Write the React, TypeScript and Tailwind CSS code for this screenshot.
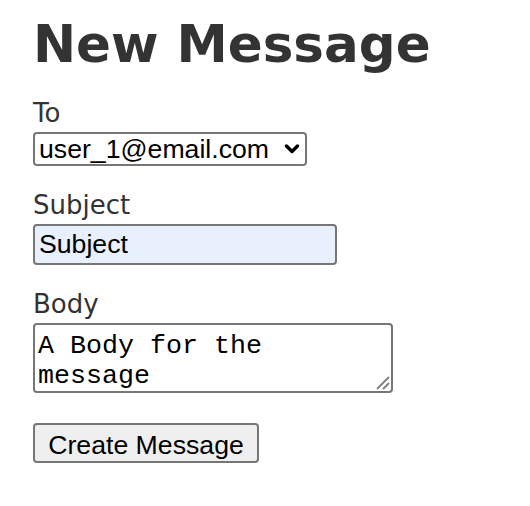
import React from "react";

const App: React.FC = () => {
  return (
    <div className="min-h-screen bg-white pl-[33px] pt-[14px] font-['DejaVu_Sans',Verdana,sans-serif] text-[#333]">
      <h1 className="text-[51.5px] leading-[60px] font-bold">New Message</h1>

      <form className="flex flex-col items-start">
        <label className="mt-[24px] text-[26px] leading-[30px]">To</label>
        <div className="relative mt-[4px]">
          <select
            defaultValue="user_1@email.com"
            className="h-[34px] w-[274px] appearance-none rounded-[4px] border-2 border-[#767676] bg-white pl-[4px] font-['Liberation_Sans',Arial,sans-serif] text-[26.67px] leading-[30px] text-black"
          >
            <option>user_1@email.com</option>
          </select>
          {/* chevron */}
          <svg
            className="pointer-events-none absolute right-[7px] top-[12px]"
            width="16"
            height="10"
            viewBox="0 0 16 10"
          >
            <path d="M2.5 2 L8 7.5 L13.5 2" fill="none" stroke="#000" strokeWidth="3.4" strokeLinecap="round" strokeLinejoin="round" />
          </svg>
        </div>

        <label className="mt-[24px] text-[26px] leading-[30px]">Subject</label>
        <input
          defaultValue="Subject"
          className="mt-[4px] h-[41px] w-[304px] rounded-[4px] border-2 border-[#767676] bg-[#e8f0fe] px-[4px] font-['Liberation_Sans',Arial,sans-serif] text-[26.67px] text-black outline-none"
        />

        <label className="mt-[24px] text-[26px] leading-[30px]">Body</label>
        <div className="relative mt-[4px]">
          <textarea
            defaultValue="A Body for the message"
            className="block h-[70px] w-[360px] resize-none overflow-hidden rounded-[4px] border-2 border-[#767676] bg-white pl-[3px] pr-[4px] pt-[6px] font-['Liberation_Mono','Courier_New',monospace] text-[26.67px] leading-[30px] text-black outline-none"
          />
          {/* resize grabber */}
          <svg className="pointer-events-none absolute bottom-[3px] right-[3px]" width="14" height="14" viewBox="0 0 14 14">
            <path d="M1 13 L13 1 M7 13 L13 7" stroke="#808080" strokeWidth="1.8" />
          </svg>
        </div>

        <button
          type="button"
          className="mt-[30px] h-[40px] w-[226px] rounded-[4px] border-2 border-[#767676] bg-[#efefef] font-['Liberation_Sans',Arial,sans-serif] text-[26.67px] text-black"
        >
          Create Message
        </button>
      </form>
    </div>
  );
};

export default App;
